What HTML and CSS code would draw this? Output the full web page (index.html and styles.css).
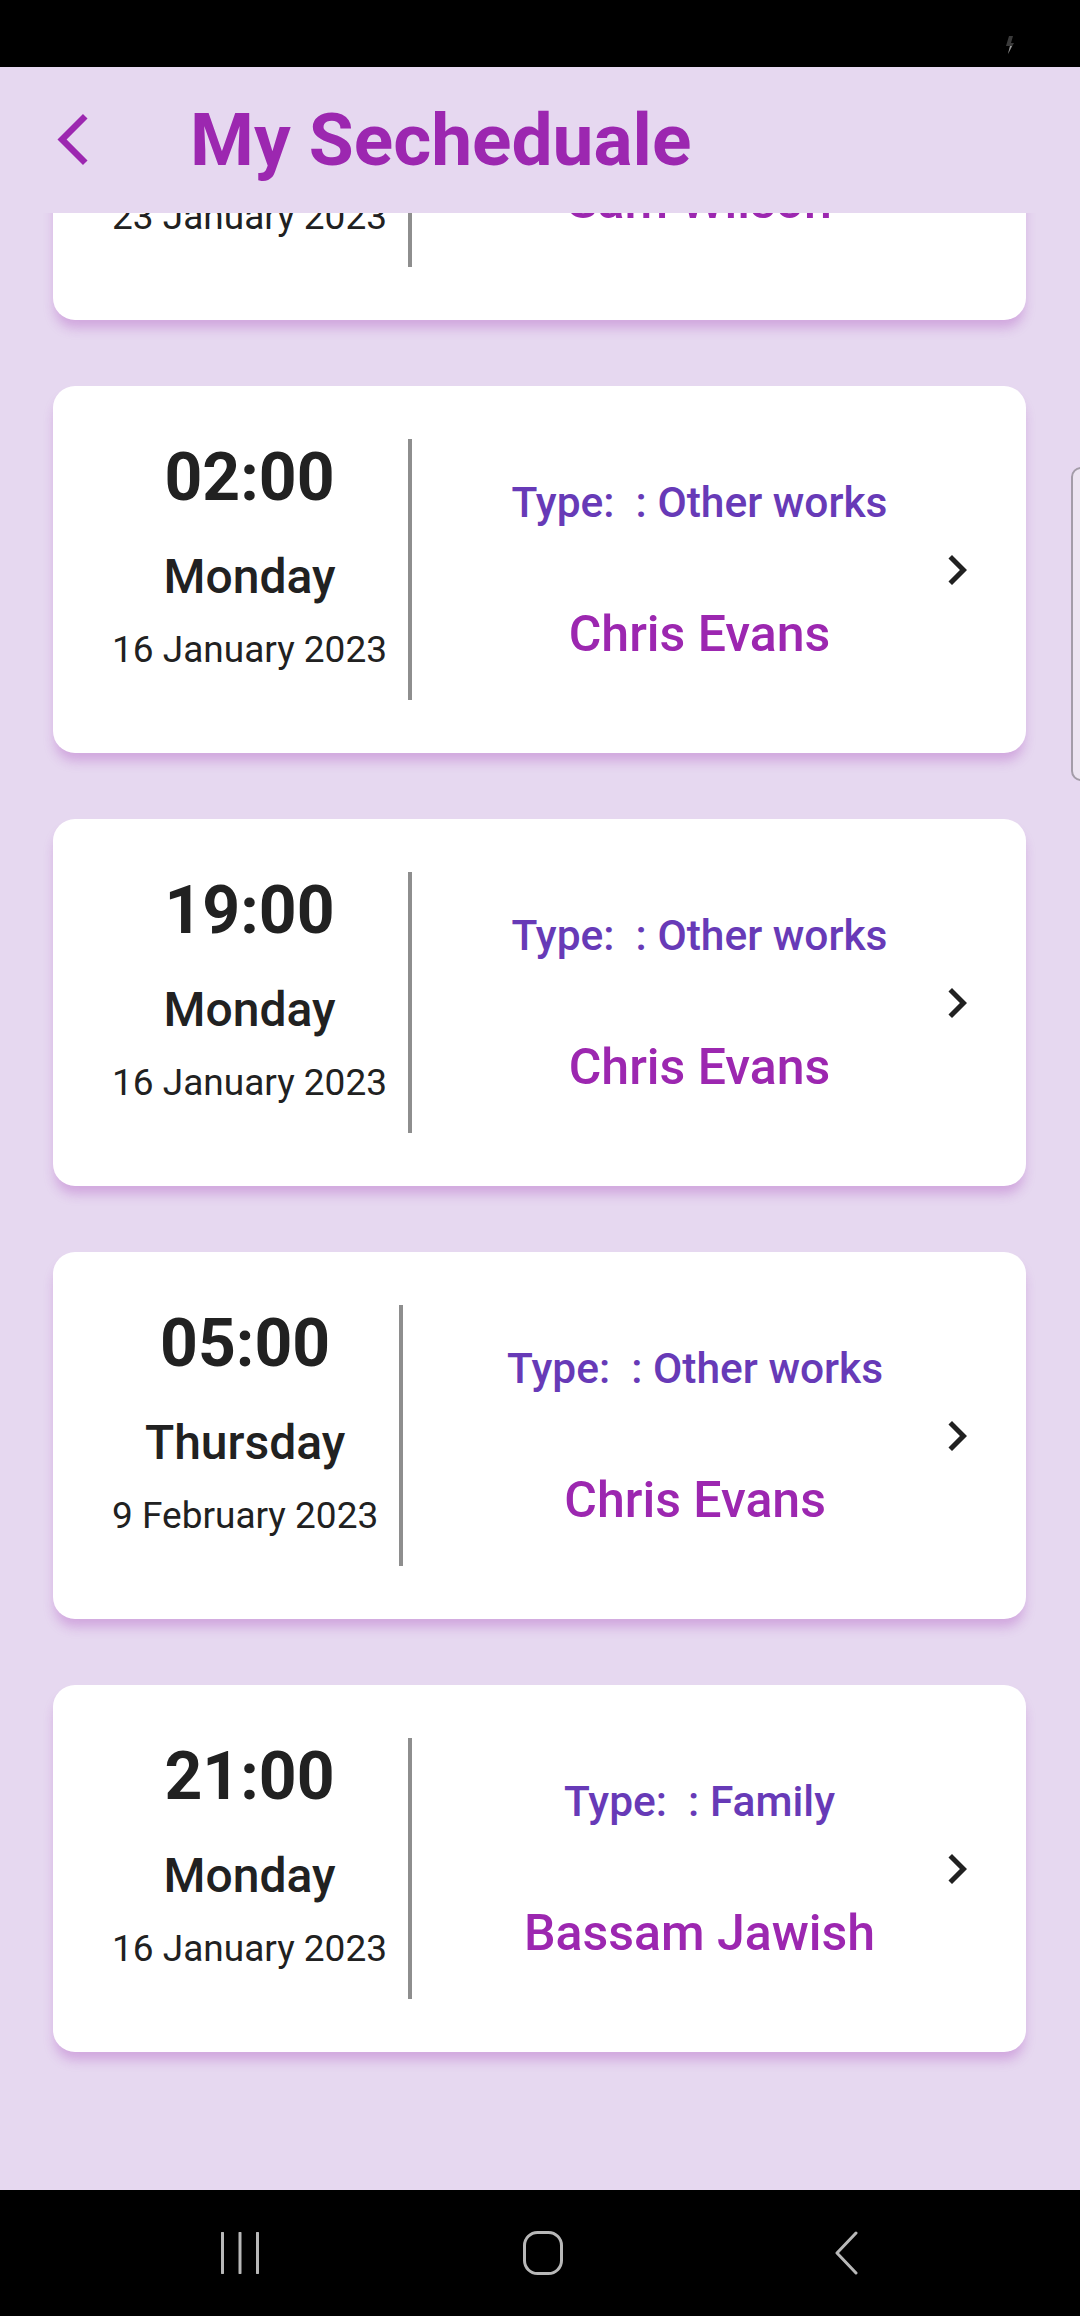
FILE: index.html
```html
<!DOCTYPE html>
<html lang="en">
<head>
<meta charset="utf-8">
<title>My Secheduale</title>
<link rel="stylesheet" href="styles.css">
</head>
<body>
<div class="screen">
  <div class="status-bar">
    <svg class="status-icon" width="8" height="18" viewBox="0 0 8 18"><path d="M3 0h4L5 7h3L2 18l2-8H0z" fill="#3a3a3a"/><path d="M2 18l2-8h2z" fill="#9a9a9a"/></svg>
  </div>
  <header class="app-bar">
    <svg class="back" width="31" height="51" viewBox="0 2.1 11.67 19.8"><path d="M11.67 3.87L9.9 2.1 0 12l9.9 9.9 1.77-1.77L3.54 12z" fill="#9c27b0"/></svg>
    <h1 class="title">My Secheduale</h1>
  </header>
  <main class="list">
    <div class="list-inner">
      <section class="card">
        <div class="when">
          <div class="time">10:00</div>
          <div class="day">Monday</div>
          <div class="date">23 January 2023</div>
        </div>
        <div class="divider"></div>
        <div class="who">
          <div class="texts">
            <div class="type">Type:&nbsp; : Other works</div>
            <div class="name">Sam Wilson</div>
          </div>
          <svg class="chev" width="60" height="60" viewBox="0 0 24 24"><path d="M10 6L8.59 7.41 13.17 12l-4.58 4.59L10 18l6-6z"/></svg>
        </div>
      </section>
      <section class="card">
        <div class="when">
          <div class="time">02:00</div>
          <div class="day">Monday</div>
          <div class="date">16 January 2023</div>
        </div>
        <div class="divider"></div>
        <div class="who">
          <div class="texts">
            <div class="type">Type:&nbsp; : Other works</div>
            <div class="name">Chris Evans</div>
          </div>
          <svg class="chev" width="60" height="60" viewBox="0 0 24 24"><path d="M10 6L8.59 7.41 13.17 12l-4.58 4.59L10 18l6-6z"/></svg>
        </div>
      </section>
      <section class="card">
        <div class="when">
          <div class="time">19:00</div>
          <div class="day">Monday</div>
          <div class="date">16 January 2023</div>
        </div>
        <div class="divider"></div>
        <div class="who">
          <div class="texts">
            <div class="type">Type:&nbsp; : Other works</div>
            <div class="name">Chris Evans</div>
          </div>
          <svg class="chev" width="60" height="60" viewBox="0 0 24 24"><path d="M10 6L8.59 7.41 13.17 12l-4.58 4.59L10 18l6-6z"/></svg>
        </div>
      </section>
      <section class="card">
        <div class="when">
          <div class="time">05:00</div>
          <div class="day">Thursday</div>
          <div class="date">9 February 2023</div>
        </div>
        <div class="divider"></div>
        <div class="who">
          <div class="texts">
            <div class="type">Type:&nbsp; : Other works</div>
            <div class="name">Chris Evans</div>
          </div>
          <svg class="chev" width="60" height="60" viewBox="0 0 24 24"><path d="M10 6L8.59 7.41 13.17 12l-4.58 4.59L10 18l6-6z"/></svg>
        </div>
      </section>
      <section class="card">
        <div class="when">
          <div class="time">21:00</div>
          <div class="day">Monday</div>
          <div class="date">16 January 2023</div>
        </div>
        <div class="divider"></div>
        <div class="who">
          <div class="texts">
            <div class="type">Type:&nbsp; : Family</div>
            <div class="name">Bassam Jawish</div>
          </div>
          <svg class="chev" width="60" height="60" viewBox="0 0 24 24"><path d="M10 6L8.59 7.41 13.17 12l-4.58 4.59L10 18l6-6z"/></svg>
        </div>
      </section>
    </div>
    <div class="scroll-thumb"></div>
  </main>
  <nav class="nav-bar">
    <div class="nav-item">
      <svg width="40" height="42" viewBox="0 0 40 42"><path d="M2.5 1v40M20 1v40M37.5 1v40" stroke="#b8b8b8" stroke-width="3" stroke-linecap="round" fill="none"/></svg>
    </div>
    <div class="nav-item">
      <svg width="40" height="44" viewBox="0 0 40 44"><rect x="1.5" y="1.5" width="37" height="41" rx="13" stroke="#b8b8b8" stroke-width="3" fill="none"/></svg>
    </div>
    <div class="nav-item">
      <svg width="26" height="44" viewBox="0 0 26 44"><path d="M23 2L4 22l19 20" stroke="#b8b8b8" stroke-width="3" stroke-linecap="round" stroke-linejoin="round" fill="none"/></svg>
    </div>
  </nav>
</div>
</body>
</html>
```
FILE: styles.css
```css
* { box-sizing: border-box; }
html, body { margin: 0; padding: 0; }
body {
  font-family: Roboto, "Noto Sans", "Liberation Sans", sans-serif;
  background: #e6d8f0;
}
.screen {
  width: 1080px;
  height: 2316px;
  display: flex;
  flex-direction: column;
  overflow: hidden;
  background: #e6d8f0;
}
.status-bar {
  height: 67px;
  flex: none;
  background: #000;
  display: flex;
  justify-content: flex-end;
  align-items: flex-start;
  padding: 36px 66px 0 0;
}
.app-bar {
  height: 146px;
  flex: none;
  display: flex;
  align-items: center;
  padding-left: 57px;
  background: #e6d8f0;
  position: relative;
  z-index: 2;
}
.back { flex: none; margin-top: -1px; }
.title {
  margin: 0 0 0 102px;
  font-size: 73px;
  line-height: 74px;
  font-weight: 700;
  color: #9c27b0;
  letter-spacing: 0;
}
.list {
  flex: 1;
  overflow: hidden;
  position: relative;
}
.list-inner {
  display: flex;
  flex-direction: column;
  gap: 66px;
  padding: 0 54px 0 53px;
  margin-top: -260px;
}
.card {
  height: 367px;
  flex: none;
  background: #fff;
  border-radius: 22px;
  display: flex;
  align-items: stretch;
  box-shadow: 0 10px 12px -2px rgba(156, 39, 176, 0.28);
}
.when {
  display: flex;
  flex-direction: column;
  align-items: center;
  padding-top: 54px;
  margin-left: 59px;
  color: #212121;
  white-space: nowrap;
}
.time {
  font-size: 66px;
  line-height: 76px;
  font-weight: 700;
}
.day {
  font-size: 48px;
  line-height: 56px;
  font-weight: 500;
  margin-top: 33px;
}
.date {
  font-size: 37px;
  line-height: 44px;
  font-weight: 400;
  margin-top: 23px;
}
.divider {
  flex: none;
  width: 4px;
  height: 261px;
  align-self: center;
  margin-left: 21px;
  background: #8e8e8e;
}
.who {
  flex: 1;
  display: grid;
  margin-right: 39px;
}
.texts {
  grid-area: 1 / 1;
  display: flex;
  flex-direction: column;
  align-items: center;
  padding-top: 92px;
  white-space: nowrap;
}
.type {
  font-size: 42.5px;
  line-height: 50px;
  font-weight: 500;
  color: #673ab7;
}
.name {
  font-size: 50px;
  line-height: 56px;
  font-weight: 500;
  margin-top: 78px;
  color: #9c27b0;
}
.chev {
  grid-area: 1 / 1;
  justify-self: end;
  align-self: center;
  fill: #212121;
}
.scroll-thumb {
  position: absolute;
  left: 1071px;
  top: 254px;
  width: 24px;
  height: 314px;
  border: 2px solid #a39ca8;
  border-radius: 10px;
  background: #ece4f1;
}
.nav-bar {
  height: 126px;
  flex: none;
  background: #000;
  display: flex;
  justify-content: center;
  align-items: center;
  padding-left: 6px;
}
.nav-item {
  width: 303px;
  display: flex;
  justify-content: center;
  align-items: center;
}
```
